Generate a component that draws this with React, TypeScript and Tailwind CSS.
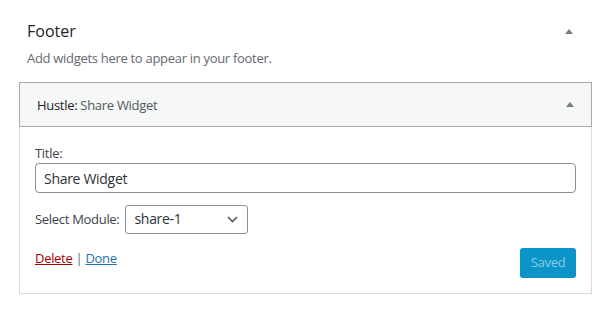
import { useState } from 'react';

function Caret() {
  return (
    <svg className="w-[8px] h-[5px]" viewBox="0 0 8 5">
      <polygon points="4,0 8,5 0,5" fill="#787c82" />
    </svg>
  );
}

export default function App() {
  const [title, setTitle] = useState('Share Widget');

  return (
    <div
      className="min-h-screen bg-white text-[#3c434a] pl-[19px] pr-[19px] tracking-[-0.3px]"
      style={{ fontFamily: '"Open Sans", "Noto Sans", sans-serif' }}
    >
      <div className="flex items-center justify-between pl-[8px] pr-[18px] pt-[19px] h-[43px]">
        <h2 className="text-[16px] leading-[24px] text-[#1d2327] font-normal tracking-normal">Footer</h2>
        <Caret />
      </div>
      <p className="pl-[8px] text-[13px] leading-[20px] text-[#646970] mt-[5px]">
        Add widgets here to appear in your footer.
      </p>

      <div className="mt-[14px] w-[573px]">
        <div className="flex items-center justify-between h-[45px] bg-[#f6f7f7] border border-[#a7aaad] pl-[17px] pr-[17px]">
          <h3 className="text-[13px] leading-[20px] text-[#50575e]">
            <span className="text-[#1d2327]">Hustle:</span> Share Widget
          </h3>
          <Caret />
        </div>

        <div className="border-x border-b border-[#dcdcde] px-[15px] pt-[17px] pb-[15px]">
          <label className="block text-[13px] leading-[18px] text-[#3c434a]">Title:</label>
          <input
            value={title}
            onChange={(e) => setTitle(e.target.value)}
            className="block w-full h-[30px] mt-[1px] px-[8px] border border-[#8c8f94] rounded-[4px] text-[14px] text-[#2c3338] outline-none"
          />

          <div className="flex items-center mt-[12px] gap-[6px]">
            <span className="text-[13px] text-[#3c434a]">Select Module:</span>
            <div className="relative w-[123px] h-[29px] border border-[#8c8f94] rounded-[3px] flex items-center pl-[8px] pb-[3px]">
              <span className="text-[14px] text-[#2c3338]">share-1</span>
              <svg className="absolute right-[9px] top-[10px] w-[11px] h-[7px]" viewBox="0 0 11 7">
                <path d="M1 1l4.5 4.5L10 1" fill="none" stroke="#50575e" strokeWidth="1.6" />
              </svg>
            </div>
          </div>

          <div className="flex items-start justify-between mt-[14px]">
            <div className="text-[13px] leading-[18px] mt-[1px]">
              <a href="#" className="text-[#a00] underline">Delete</a>
              <span className="text-[#646970]"> | </span>
              <a href="#" className="text-[#2271b1] underline">Done</a>
            </div>
            <button className="w-[56px] h-[30px] rounded-[3px] bg-[#0a94c8] text-[#8fcbe6] text-[13px]">
              Saved
            </button>
          </div>
        </div>
      </div>
    </div>
  );
}
